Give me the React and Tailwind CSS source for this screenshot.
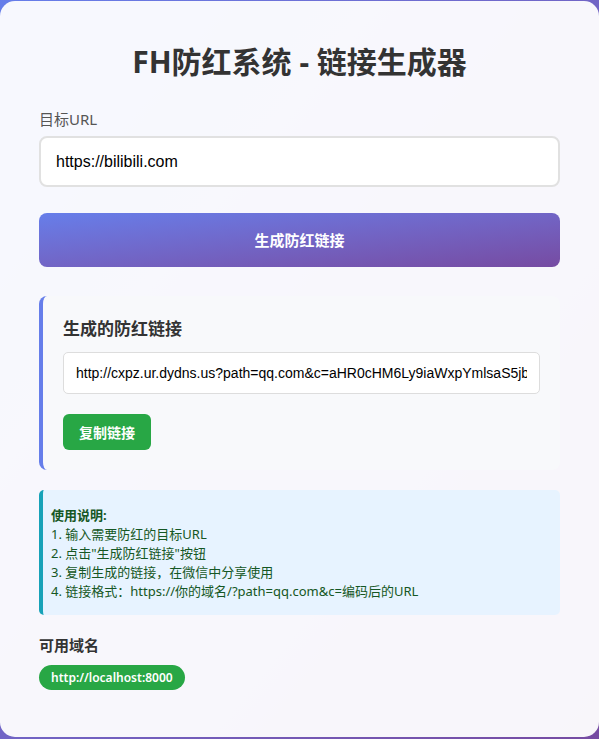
import React, { useState } from 'react';

export default function App() {
  const [url, setUrl] = useState('https://bilibili.com');
  const link = 'http://cxpz.ur.dydns.us?path=qq.com&c=aHR0cHM6Ly9iaWxpYmlsaS5jb20=';

  return (
    <div
      className="min-h-screen bg-gradient-to-br from-[#667eea] to-[#764ba2] pt-px"
      style={{ fontFamily: '"Noto Sans", "Noto Sans CJK SC", sans-serif' }}
    >
      <div className="bg-white/95 rounded-[15px] px-[39px] pt-[38px] pb-[46px] min-h-[736px]">
        <h1 className="text-center text-[30px] font-bold text-[#333] leading-[46px] mb-[23px]">
          FH防红系统 - 链接生成器
        </h1>

        <label className="block text-[15px] text-[#555] leading-[22px] mb-[6px]">目标URL</label>
        <input
          value={url}
          onChange={(e) => setUrl(e.target.value)}
          className="w-full h-[51px] px-[15px] bg-white border-2 border-[#e1e1e1] rounded-[8px] text-[16px] text-black outline-none"
          style={{ fontFamily: '"Liberation Sans", Arial, sans-serif' }}
        />

        <button
          type="button"
          className="mt-[26px] w-full h-[54px] rounded-[8px] bg-gradient-to-br from-[#667eea] to-[#764ba2] text-white text-[15px] font-bold"
        >
          生成防红链接
        </button>

        {/* result box */}
        <div className="mt-[29px] bg-[#f8f9fb] border-l-4 border-[#667eea] rounded-[8px] pl-[20px] pr-[20px] pt-[20px] pb-[20px]">
          <h3 className="text-[17px] font-bold text-[#333] leading-[26px] mb-[10px]">生成的防红链接</h3>
          <input
            readOnly
            value={link}
            className="w-full h-[42px] px-[12px] bg-white border border-[#ddd] rounded-[5px] text-[14px] text-black outline-none"
            style={{ fontFamily: '"Liberation Sans", Arial, sans-serif' }}
          />
          <button
            type="button"
            className="mt-[20px] h-[36px] w-[88px] rounded-[6px] bg-[#28a745] text-white text-[14px] font-bold"
          >
            复制链接
          </button>
        </div>

        {/* instructions */}
        <div className="mt-[20px] bg-[#e7f3ff] border-l-4 border-[#17a2b8] rounded-[5px] pl-[8px] pr-[12px] pt-[16px] pb-[14px] text-[13px] leading-[19px] text-[#155724]">
          <div className="font-bold">使用说明:</div>
          <div>1. 输入需要防红的目标URL</div>
          <div>2. 点击"生成防红链接"按钮</div>
          <div>3. 复制生成的链接，在微信中分享使用</div>
          <div>4. 链接格式：https://你的域名/?path=qq.com&amp;c=编码后的URL</div>
        </div>

        <h4 className="mt-[18px] text-[15px] font-bold text-[#333] leading-[24px]">可用域名</h4>
        <div className="mt-[8px] flex">
          <span className="inline-flex items-center h-[25px] px-[12px] rounded-full bg-[#28a745] text-white text-[12px] font-semibold">
            http://localhost:8000
          </span>
        </div>
      </div>
    </div>
  );
}
